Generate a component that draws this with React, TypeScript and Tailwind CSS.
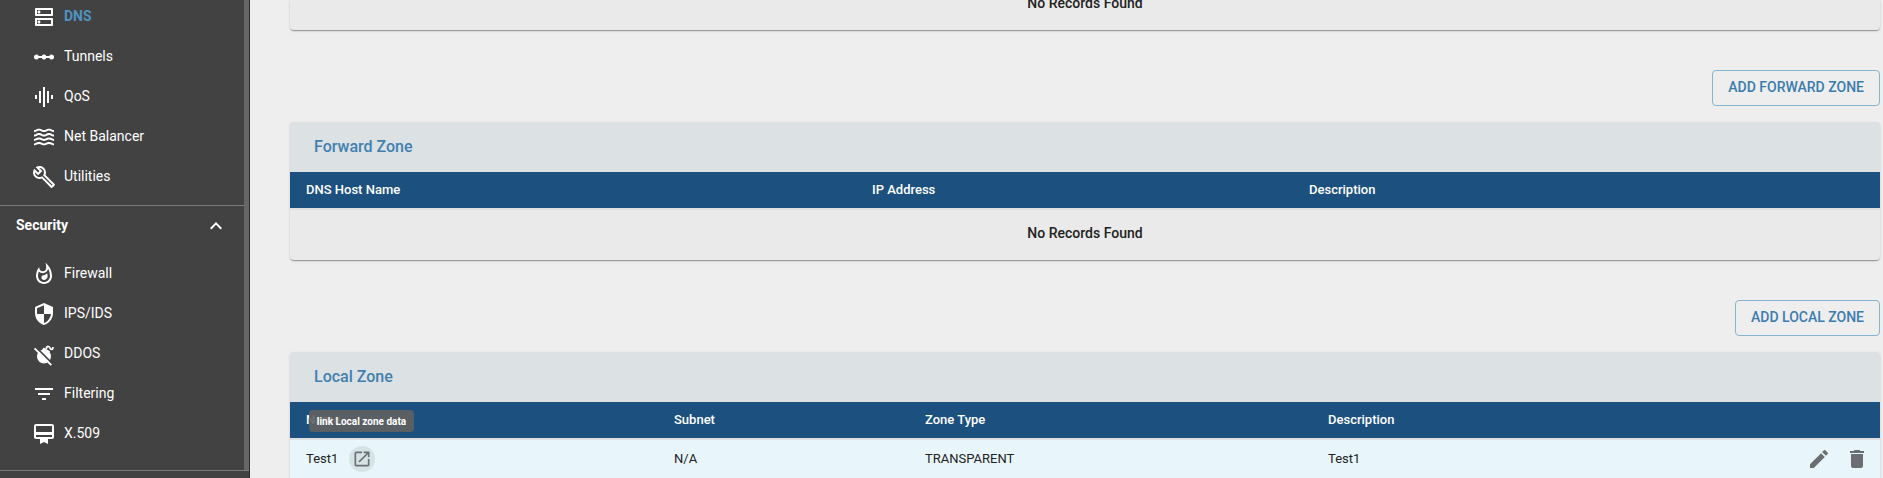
import React from 'react';
import {
  MdOutlineDns, MdLinearScale, MdGraphicEq, MdWaves, MdOutlineBuild, MdOutlineWhatshot,
  MdSecurity, MdFilterList, MdCardMembership, MdExpandLess, MdOpenInNew, MdEdit, MdDelete,
} from 'react-icons/md';

function BombOff({ size = 24 }: { size?: number }) {
  return (
    <svg width={size} height={size} viewBox="0 0 24 24" fill="none" stroke="currentColor">
      <circle cx="12" cy="14.500" r="7" fill="currentColor" stroke="none" />
      <path d="m11.500 5.600 6.500 3.700-1.500 2.700-6.500-3.700Z" fill="currentColor" stroke="none" />
      <path d="M14.200 7c.3-1.700 1.100-2.700 2.300-2.500 1.600.2 1.200 2.900 3 2.900 1 0 1.500-.8 1.500-2.400" strokeWidth="1.700" />
      <path d="M3.900 5.100 20.900 22.100" stroke="#424242" strokeWidth="1.700" />
      <path d="M2.600 6.400 19.300 23.100" strokeWidth="1.900" />
    </svg>
  );
}

type Item = { label: string; icon: React.ReactNode; active?: boolean };

const network: Item[] = [
  { label: 'DNS', icon: <MdOutlineDns size={24} />, active: true },
  { label: 'Tunnels', icon: <MdLinearScale size={24} /> },
  { label: 'QoS', icon: <MdGraphicEq size={24} /> },
  { label: 'Net Balancer', icon: <MdWaves size={24} /> },
  { label: 'Utilities', icon: <MdOutlineBuild size={24} /> },
];

const security: Item[] = [
  { label: 'Firewall', icon: <MdOutlineWhatshot size={24} /> },
  { label: 'IPS/IDS', icon: <MdSecurity size={24} /> },
  { label: 'DDOS', icon: <BombOff /> },
  { label: 'Filtering', icon: <MdFilterList size={24} /> },
  { label: 'X.509', icon: <MdCardMembership size={24} /> },
];

function NavItem({ item }: { item: Item }) {
  return (
    <li className="flex h-10 shrink-0 items-center pl-8">
      {item.icon}
      <span className={item.active ? 'ml-2 pb-[3px] text-sm font-bold leading-5 text-[#4f93c0]' : 'ml-2 pb-[3px] text-sm leading-5'}>
        {item.label}
      </span>
    </li>
  );
}

function Sidebar() {
  return (
    <nav className="flex h-full w-[250px] shrink-0 flex-col border-r border-[#2f2f2f] bg-[#424242] text-white">
      <div className="flex h-[470px] shrink-0 border-r-[5px] border-[#666]">
        <div className="flex grow flex-col">
          <ul className="-mt-[3px] flex h-[209px] shrink-0 flex-col border-b border-[#7b7b7b]">
            {network.map((i) => <NavItem key={i.label} item={i} />)}
          </ul>
          <div className="flex h-[48px] shrink-0 items-center justify-between pb-[8px] pl-4 pr-[16px]">
            <span className="pb-[2px] text-sm font-bold leading-5">Security</span>
            <MdExpandLess size={24} />
          </div>
          <ul className="flex flex-col">
            {security.map((i) => <NavItem key={i.label} item={i} />)}
          </ul>
        </div>
      </div>
      <div className="h-2 border-t border-[#7b7b7b]" />
    </nav>
  );
}

const cardShadow = 'shadow-[0_2px_1px_-1px_rgba(0,0,0,0.2),0_1px_1px_0_rgba(0,0,0,0.14),0_1px_3px_0_rgba(0,0,0,0.12)]';

function AddButton({ children }: { children: React.ReactNode }) {
  return (
    <div className="flex h-[92px] shrink-0 items-start justify-end pt-[40px]">
      <button className="h-9 rounded border border-[#86b5d1] px-[15px] pb-[2px] text-sm font-medium leading-6 text-[#3a7cae]">
        {children}
      </button>
    </div>
  );
}

function Card({ title, head, children }: { title: string; head: React.ReactNode; children: React.ReactNode }) {
  return (
    <section className={`flex shrink-0 flex-col overflow-hidden rounded bg-[#eaeaea] ${cardShadow}`}>
      <h2 className="flex h-[50px] items-center bg-[#dce1e3] pb-[1px] pl-6 text-base font-medium text-[#4080b1]">{title}</h2>
      {head}
      {children}
    </section>
  );
}

function Empty() {
  return <p className="flex h-[50px] items-center justify-center pb-[4px] text-sm font-medium text-[#222]">No Records Found</p>;
}

export default function App() {
  return (
    <div className="flex h-[478px] w-full overflow-hidden bg-[#eee] font-['Roboto',sans-serif]">
      <Sidebar />
      <main className="flex min-w-0 grow flex-col pl-10 pr-[3px]">
        <section className={`h-[30px] shrink-0 rounded-b bg-[#eaeaea] ${cardShadow}`}>
          <div className="-mt-5"><Empty /></div>
        </section>
        <AddButton>ADD FORWARD ZONE</AddButton>
        <Card
          title="Forward Zone"
          head={
            <div className="grid h-[38px] grid-cols-[566px_437px_1fr] items-center border-b-2 border-[#e0e0e0] bg-[#1c517f] pl-4 text-[13px] font-medium text-white">
              <span>DNS Host Name</span><span>IP Address</span><span>Description</span>
            </div>
          }
        >
          <Empty />
        </Card>
        <AddButton>ADD LOCAL ZONE</AddButton>
        <Card
          title="Local Zone"
          head={
            <div className="relative grid h-[38px] grid-cols-[368px_251px_403px_1fr] items-center border-b-2 border-[#e0e0e0] bg-[#1c517f] pl-4 text-[13px] font-medium text-white">
              <span>Name</span><span>Subnet</span><span>Zone Type</span><span>Description</span>
              <div className="absolute left-[19px] top-[8px] flex h-[22px] w-[105px] items-center justify-center whitespace-nowrap rounded bg-[#616161]/90 text-[10px] font-bold">
                link Local zone data
              </div>
            </div>
          }
        >
          <div className="grid h-[42px] grid-cols-[368px_251px_403px_1fr_auto] items-center bg-[#e8f6fb] pb-[4px] pl-4 text-[13px] text-[#222]">
            <span className="flex items-center">
              Test1
              <span className="ml-[11px] flex h-[26px] w-[26px] items-center justify-center rounded-full bg-[#d5e3e5] text-[#6b7173]">
                <MdOpenInNew size={20} />
              </span>
            </span>
            <span>N/A</span><span>TRANSPARENT</span><span>Test1</span>
            <span className="flex items-center gap-[14px] pr-[11px] text-[#6b6f71]">
              <MdEdit size={24} /><MdDelete size={24} />
            </span>
          </div>
        </Card>
      </main>
    </div>
  );
}
